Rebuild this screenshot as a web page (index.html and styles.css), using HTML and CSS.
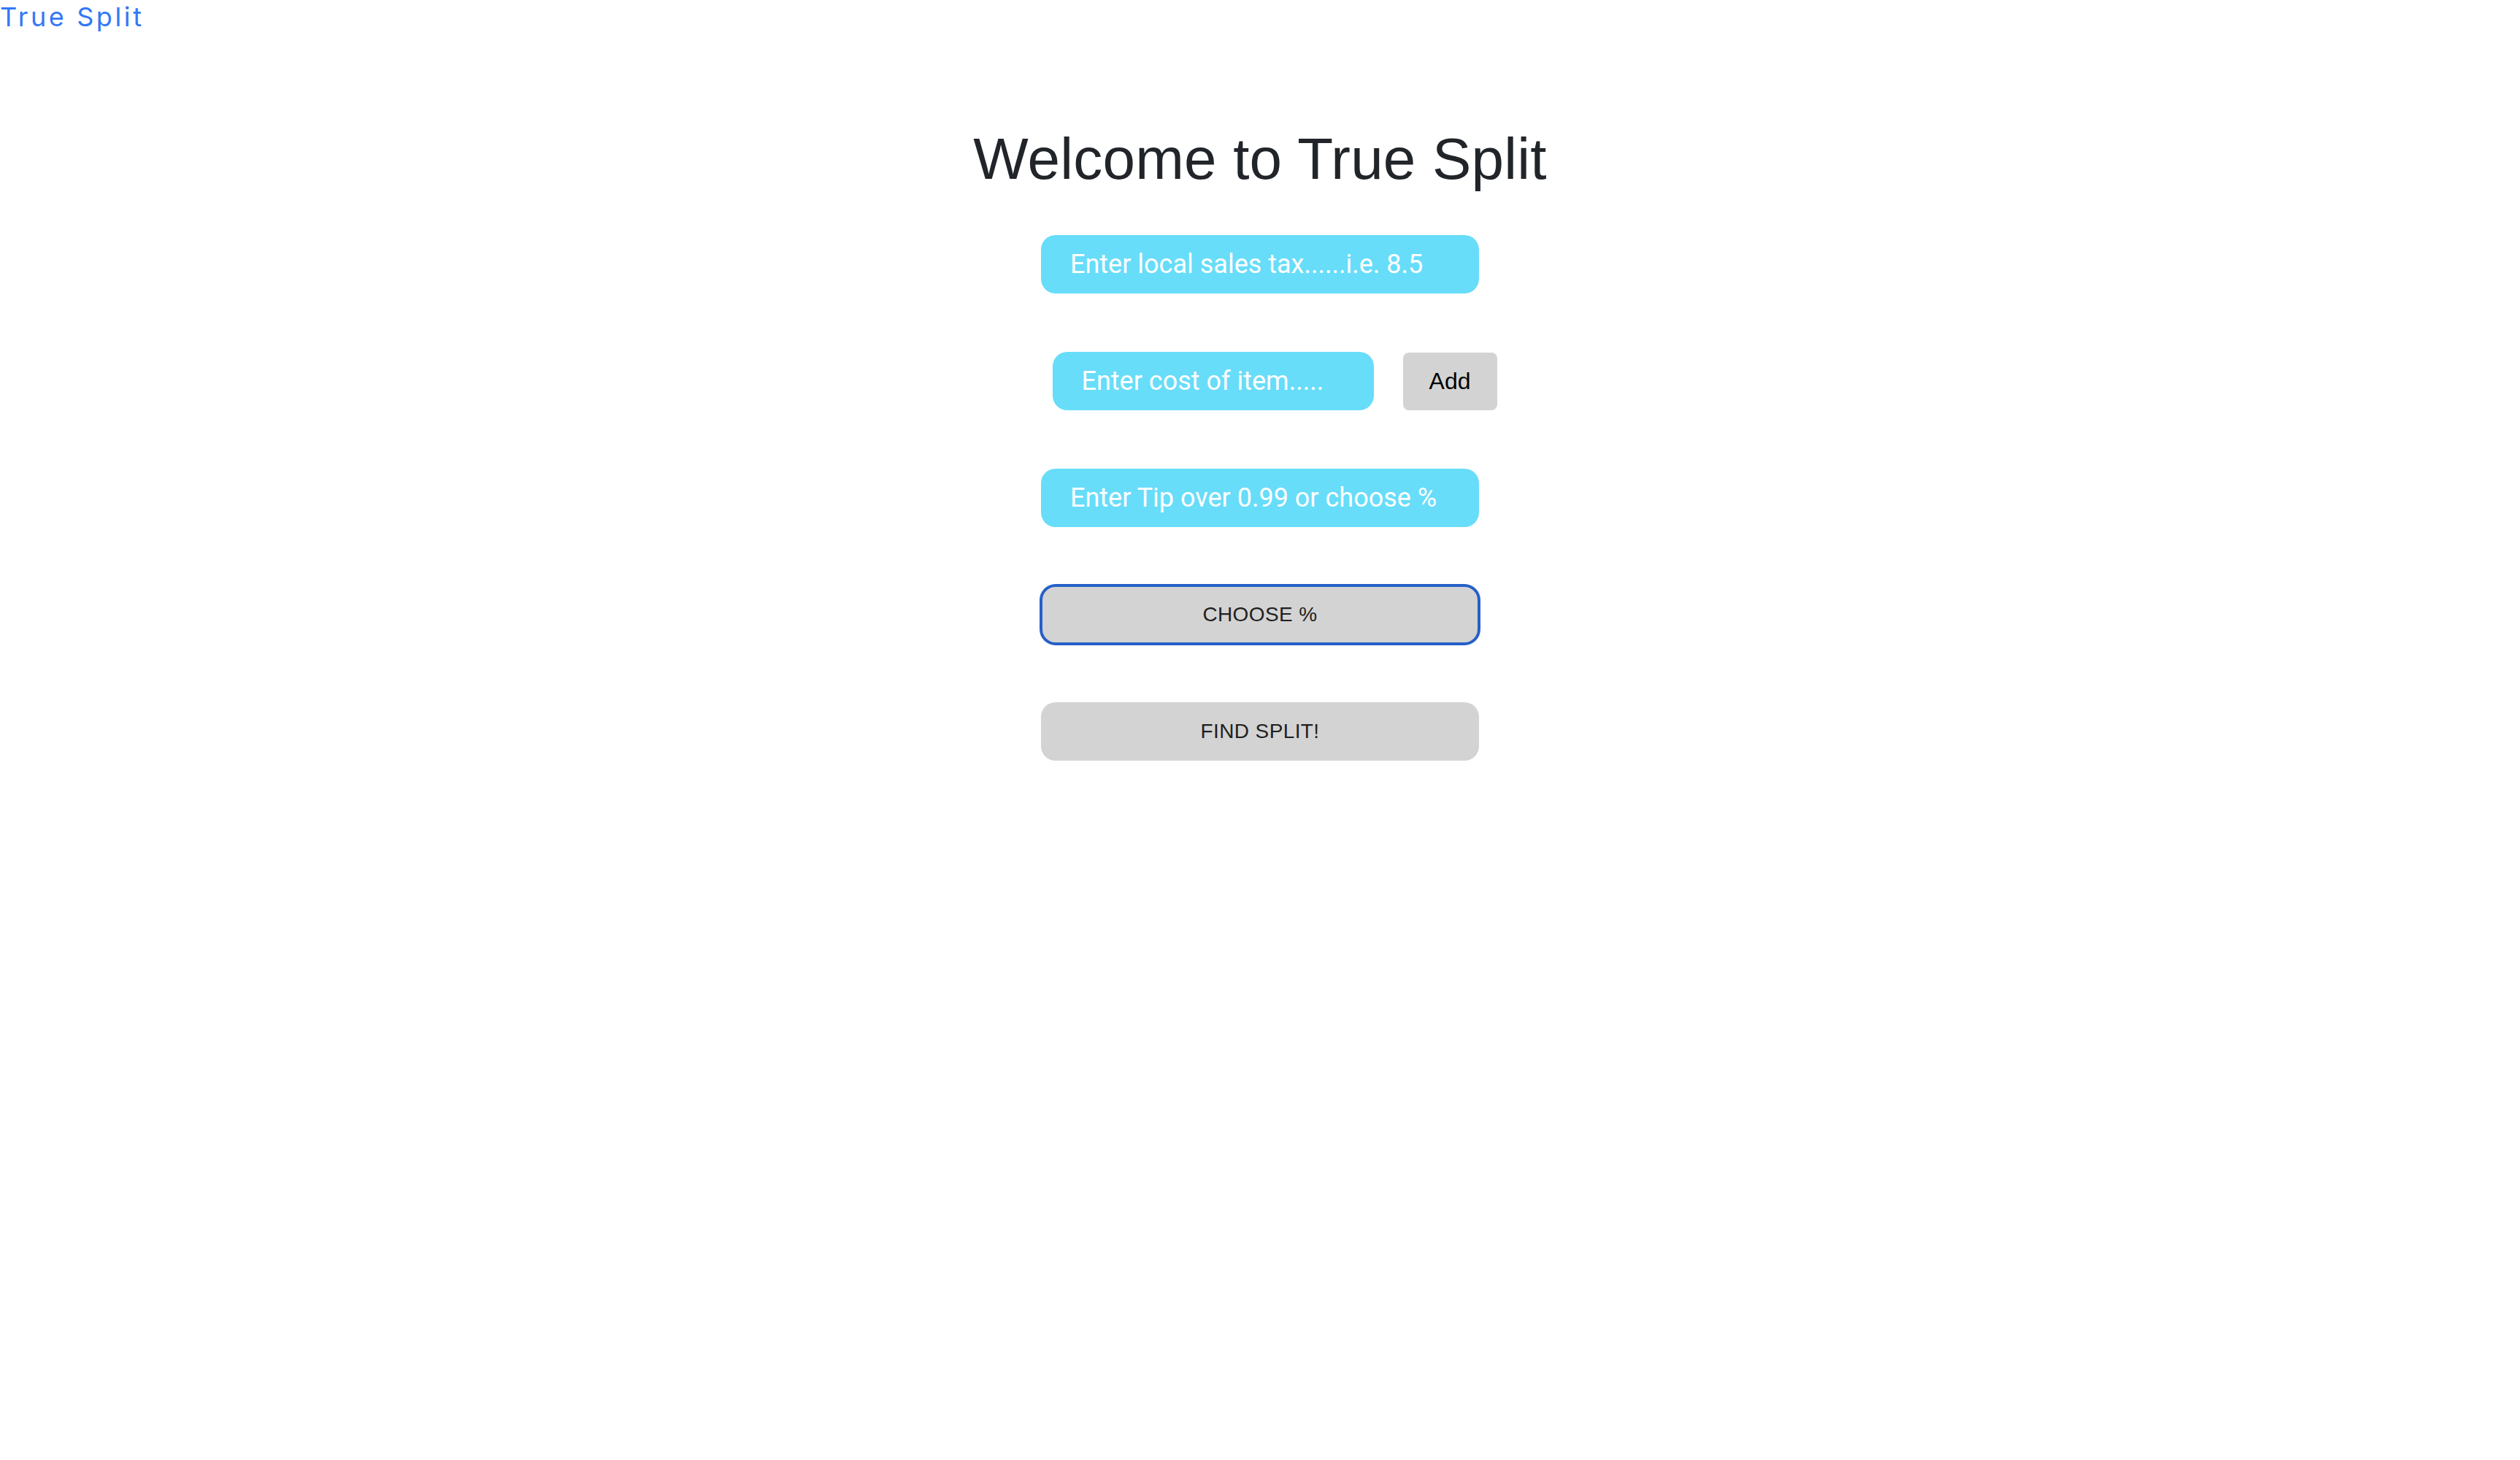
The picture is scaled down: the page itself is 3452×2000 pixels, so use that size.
FILE: index.html
```html
<!DOCTYPE html>
<html lang="en">
<head>
<meta charset="utf-8">
<title>True Split</title>
<link rel="stylesheet" href="styles.css">
</head>
<body>
  <nav class="topbar">
    <a class="brand" href="#">True Split</a>
  </nav>
  <main class="main">
    <h1 class="title">Welcome to True Split</h1>
    <div class="form">
      <input class="field field-wide" type="text" placeholder="Enter local sales tax......i.e. 8.5">
      <div class="cost-row">
        <input class="field field-cost" type="text" placeholder="Enter cost of item.....">
        <button class="add-btn" type="button">Add</button>
      </div>
      <input class="field field-wide" type="text" placeholder="Enter Tip over 0.99 or choose %">
      <button class="wide-btn wide-btn-focus" type="button">CHOOSE %</button>
      <button class="wide-btn" type="button">FIND SPLIT!</button>
    </div>
  </main>
</body>
</html>
```
FILE: styles.css
```css
html, body {
  margin: 0;
  padding: 0;
  background: #ffffff;
}

body {
  font-family: "Liberation Sans", Arial, sans-serif;
  color: #212529;
}

.topbar {
  padding-top: 2px;
}

.brand {
  display: inline-block;
  font-family: Inter, "Noto Sans", sans-serif;
  font-size: 36px;
  line-height: 1.2;
  letter-spacing: 3.6px;
  color: #3478f6;
  text-decoration: none;
}

.main {
  display: flex;
  flex-direction: column;
  align-items: center;
}

.title {
  margin: 125px 0 0 0;
  font-family: "Liberation Sans", Arial, sans-serif;
  font-weight: 400;
  font-size: 80px;
  line-height: 1.2;
  letter-spacing: 0.2px;
  color: #212529;
}

.form {
  margin-top: 56px;
  display: flex;
  flex-direction: column;
  align-items: center;
  gap: 80px;
}

.field {
  box-sizing: border-box;
  height: 80px;
  border: none;
  outline: none;
  border-radius: 20px;
  background: #67ddf9;
  padding: 0 40px;
  font-family: Roboto, "Noto Sans", sans-serif;
  font-size: 36px;
  color: #ffffff;
}

.field::placeholder {
  color: #ffffff;
  opacity: 1;
}

.field-wide {
  width: 600px;
}

.cost-row {
  display: flex;
  align-items: center;
  gap: 40px;
  padding-left: 40px;
}

.field-cost {
  width: 440px;
}

.add-btn {
  box-sizing: border-box;
  width: 129px;
  height: 79px;
  border: none;
  border-radius: 8px;
  background: #d3d3d3;
  font-family: "Liberation Sans", Arial, sans-serif;
  font-size: 32px;
  color: #000000;
  padding: 0;
}

.wide-btn {
  box-sizing: border-box;
  width: 600px;
  height: 80px;
  border: none;
  border-radius: 20px;
  background: #d3d3d3;
  font-family: "Liberation Sans", Arial, sans-serif;
  font-size: 28px;
  letter-spacing: 0.4px;
  color: #1f1f1f;
  padding: 0;
}

.wide-btn-focus {
  border: 2px solid #2660c8;
  box-shadow: 0 0 0 2px #2660c8;
}
```
